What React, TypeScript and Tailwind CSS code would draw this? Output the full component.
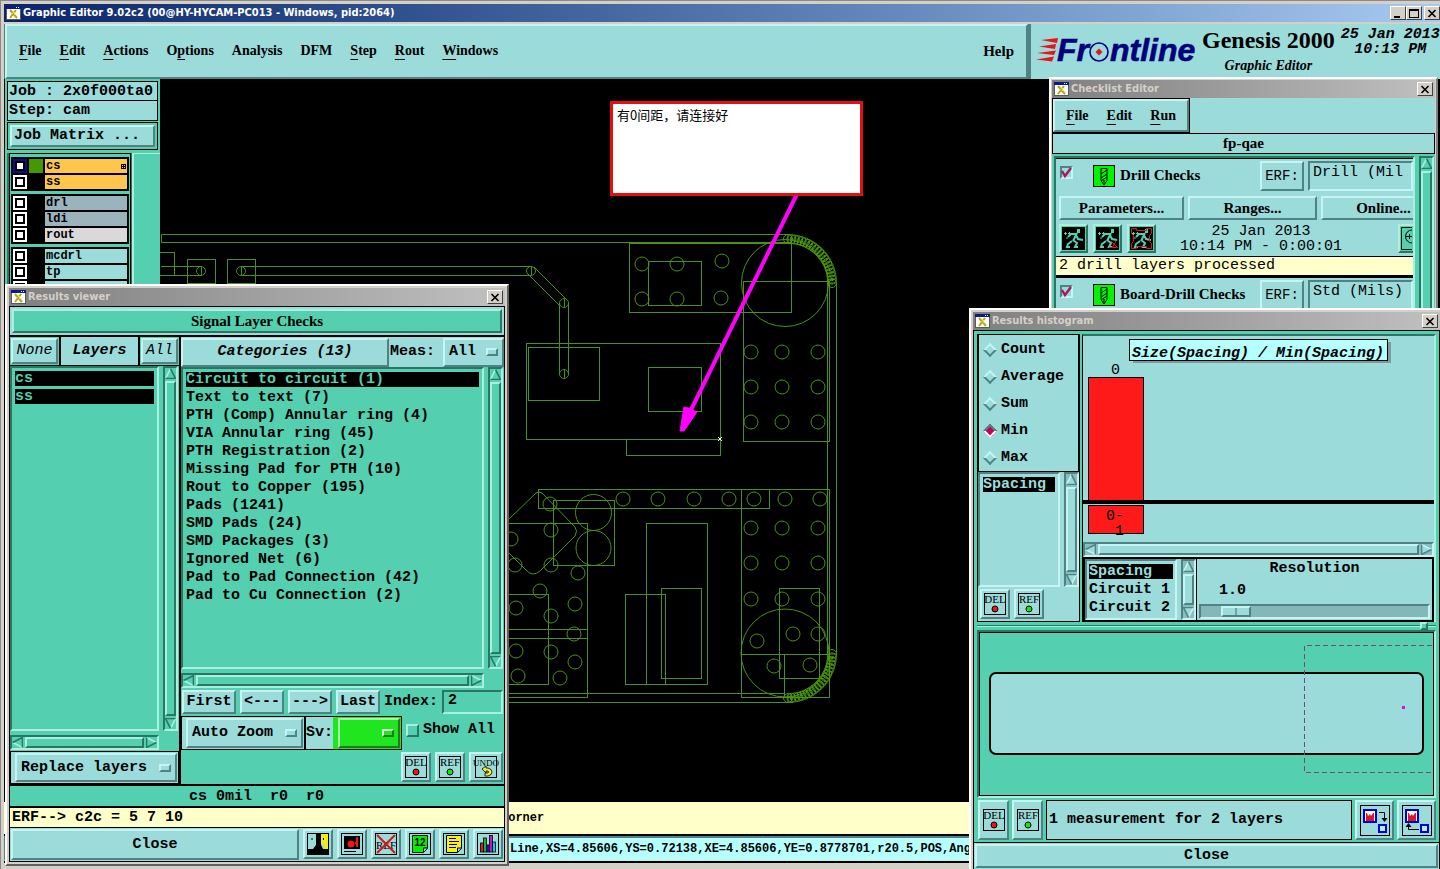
import { useState, type ReactNode } from "react";
import { clsx } from "clsx";

// Motif style bevels, light cyan and teal flavours
const RAISED = "border-2 border-t-[#c6f4f2] border-l-[#c6f4f2] border-b-[#4f8283] border-r-[#4f8283] bg-[#9bdbda]";
const SUNKEN = "border-2 border-t-[#4f8283] border-l-[#4f8283] border-b-[#c6f4f2] border-r-[#c6f4f2] bg-[#9bdbda]";
const RAISED_TEAL = "border-2 border-t-[#a9f0e0] border-l-[#a9f0e0] border-b-[#2a7664] border-r-[#2a7664] bg-[#54cfb0]";
const SUNKEN_TEAL = "border-2 border-t-[#2a7664] border-l-[#2a7664] border-b-[#a9f0e0] border-r-[#a9f0e0] bg-[#54cfb0]";
const SERIF = "font-['Liberation_Serif',serif]";
const MONO = "font-['Liberation_Mono',monospace]";

const MAIN_MENU = [
  ["", "F", "ile"],
  ["", "E", "dit"],
  ["", "A", "ctions"],
  ["O", "p", "tions"],
  ["Analysis", "", ""],
  ["DFM", "", ""],
  ["", "S", "tep"],
  ["", "R", "out"],
  ["", "W", "indows"],
];

const CHECKLIST_MENU = [
  ["", "F", "ile"],
  ["", "E", "dit"],
  ["", "R", "un"],
];

const LAYER_GROUPS = [
  [
    { name: "cs", label: "bg-[#ffc64b]", current: true },
    { name: "ss", label: "bg-[#ffc64b]" },
  ],
  [
    { name: "drl", label: "bg-[#9ab3bd]" },
    { name: "ldi", label: "bg-[#9ab3bd]" },
    { name: "rout", label: "bg-[#dad8da]" },
  ],
  [
    { name: "mcdrl", label: "bg-[#9bdbda]" },
    { name: "tp", label: "bg-[#9bdbda]" },
    { name: "", label: "bg-[#9bdbda]" },
  ],
];

const CATEGORIES = [
  "Circuit to circuit (1)",
  "Text to text (7)",
  "PTH (Comp) Annular ring (4)",
  "VIA Annular ring (45)",
  "PTH Registration (2)",
  "Missing Pad for PTH (10)",
  "Rout to Copper (195)",
  "Pads (1241)",
  "SMD Pads (24)",
  "SMD Packages (3)",
  "Ignored Net (6)",
  "Pad to Pad Connection (42)",
  "Pad to Cu Connection (2)",
];

function MenuItems({ items }: { items: string[][] }) {
  return (
    <>
      {items.map(([pre, key, post]) => (
        <button key={pre + key + post} type="button" className={clsx(SERIF, "text-[14px] font-bold")}>
          {pre}
          <span className="underline decoration-1 underline-offset-4">{key}</span>
          {post}
        </button>
      ))}
    </>
  );
}

function AppIcon() {
  return (
    <svg className="h-[14px] w-[15px] shrink-0" viewBox="0 0 15 14" shapeRendering="crispEdges">
      <path d="M0 0h15v14H0z" fill="#5a5a5a" />
      <path d="M1 3h13v10H1z" fill="#fff" />
      <path d="M0 0h15v3H0z" fill="#0b1a86" />
      <path d="M10 1h1v1h-1zM12 1h1v1h-1z" fill="#fff" />
      <path d="M4 4l7 8M10 4l-6 8" stroke="#b3a617" strokeWidth="2" fill="none" shapeRendering="auto" />
      <path d="M6 8l2-2 1 3" stroke="#e9dd3a" fill="none" />
    </svg>
  );
}

function WinButton({ label, children }: { label: string; children: ReactNode }) {
  return (
    <button
      type="button"
      aria-label={label}
      className="flex h-[14px] w-4 shrink-0 items-center justify-center border border-t-white border-l-white border-b-[#404040] border-r-[#404040] bg-[#d4d0c8]"
    >
      <svg className="h-[9px] w-[10px]" viewBox="0 0 10 9" shapeRendering="crispEdges" fill="none" stroke="#000">
        {children}
      </svg>
    </button>
  );
}

const CLOSE_MARK = <path d="M1.5 1l7 7M8.5 1l-7 7" strokeWidth="1.6" shapeRendering="auto" />;

function TitleBar({ title }: { title: string }) {
  return (
    <div className="flex h-[18px] shrink-0 items-center gap-[2px] bg-linear-to-r from-[#808080] to-[#c0c0c0] px-[2px]">
      <AppIcon />
      <h2 className="flex-1 font-['DejaVu_Sans_Condensed','DejaVu_Sans',sans-serif] text-[11px] font-bold text-[#d4d0c8]">{title}</h2>
      <WinButton label={`Close ${title}`}>{CLOSE_MARK}</WinButton>
    </div>
  );
}

function Scrollbar({ horizontal, teal, className }: { horizontal?: boolean; teal?: boolean; className?: string }) {
  const edge = teal ? "#2a7664" : "#4f8283";
  const lite = teal ? "#a9f0e0" : "#c6f4f2";
  const face = teal ? "#54cfb0" : "#9bdbda";
  const arrow = (turn: string) => (
    <svg className={clsx("size-[11px] shrink-0", turn)} viewBox="0 0 10 10">
      <path d="M5 0.5L9.5 9.5H0.5z" fill={face} />
      <path d="M5 0.5L0.5 9.5" stroke={lite} strokeWidth="1.4" />
      <path d="M5 0.5L9.5 9.5H0.5" stroke={edge} strokeWidth="1.4" fill="none" />
    </svg>
  );
  return (
    <div
      aria-hidden
      className={clsx(
        "flex shrink-0 gap-[2px]",
        teal ? SUNKEN_TEAL : SUNKEN,
        teal ? "bg-[#45a890]" : "bg-[#86bdbd]",
        horizontal ? "h-[15px] flex-row" : "w-[15px] flex-col",
        className
      )}
    >
      {arrow(horizontal ? "-rotate-90" : "")}
      <div className={clsx("min-h-0 flex-1", teal ? RAISED_TEAL : RAISED)} />
      {arrow(horizontal ? "rotate-90" : "rotate-180")}
    </div>
  );
}

function OptionMenu({ label, options, className }: { label: string; options: string[]; className?: string }) {
  return (
    <label className={clsx("flex items-center gap-1 pr-1 pl-1", RAISED, className)}>
      <select aria-label={label} className="min-w-0 flex-1 appearance-none bg-transparent outline-none">
        {options.map((o) => (
          <option key={o}>{o}</option>
        ))}
      </select>
      <span className={clsx("h-2 w-3 shrink-0", RAISED)} />
    </label>
  );
}

function StampButton({ text, dot, className }: { text: string; dot?: string; className?: string }) {
  return (
    <button type="button" className={clsx("flex shrink-0 items-center justify-center", RAISED, className)}>
      <svg className="h-6 w-[26px]" viewBox="0 0 26 24">
        <rect x="2.5" y="1.5" width="21" height="21" fill="none" stroke="#000" shapeRendering="crispEdges" />
        <text x="13" y="11" textAnchor="middle" fontFamily="Liberation Serif" fontSize={text.length > 3 ? 9 : 11} fontWeight="400">
          {text}
        </text>
        {dot ? (
          <circle cx="13" cy="17" r="3" fill={dot} stroke="#000" />
        ) : (
          <>
            <path d="M9 14l4-3v2h2q4 1 4 4t-4 4h-3v-3h3q1-1 0-2h-2v2z" fill="#f4ec3a" stroke="#000" strokeWidth="0.8" />
          </>
        )}
      </svg>
    </button>
  );
}

function FrontlineLogo() {
  return (
    <svg className="h-10 w-[164px] shrink-0" viewBox="0 0 164 40" aria-label="Frontline">
      <g fill="#e8141c">
        <path d="M5 8l17-2-1 5zM3 14.500l17-2.500-1 5zM1 21l19-2.500-2 4.500zM0 27.500l18-3-2 5z" />
      </g>
      <g fill="#00007c" stroke="#00007c" strokeWidth="0.6" fontFamily="Liberation Sans" fontWeight="700" fontStyle="italic" fontSize="32">
        <text x="21" y="29">Fr</text>
        <text x="74" y="29">ntline</text>
      </g>
      <circle cx="63" cy="20" r="9" fill="#9bdbda" stroke="#00007c" strokeWidth="1.600" />
      <path d="M63 16.500l3.500 3.500-3.500 3.500-3.500-3.500z" fill="#e8141c" />
    </svg>
  );
}

/* ---------- board artwork ---------- */

const RECTS = [
  [187, 259, 28, 24], [227, 259, 28, 24], [150, 252, 24, 23],
  [526, 343, 194, 96], [528, 347, 71, 53], [648, 367, 53, 44], [626, 439, 94, 16],
  [629, 243, 162, 69], [648, 261, 53, 44], [743, 281, 86, 160],
  [538, 489, 231, 19], [741, 489, 88, 208], [646, 523, 61, 161], [625, 594, 40, 90],
  [661, 588, 40, 90], [779, 588, 40, 90], [553, 500, 61, 65], [480, 523, 107, 174],
  [480, 594, 68, 90], [480, 629, 107, 9],
];

const HOLES = [
  [642, 264], [677, 264], [722, 261], [642, 299], [677, 299], [721, 298],
  [751, 352], [782, 352], [818, 352], [751, 387], [782, 387], [818, 387], [751, 422], [782, 422], [818, 422],
  [550, 504], [623, 499], [658, 499], [694, 499], [729, 499], [754, 499], [785, 499], [820, 499],
  [751, 528], [782, 528], [818, 528], [751, 563], [782, 563], [818, 563], [751, 599], [782, 599], [818, 599],
  [757, 641], [793, 634], [818, 634], [774, 666], [810, 665],
  [511, 539], [551, 530], [515, 565], [551, 565], [578, 573], [540, 591], [516, 608], [575, 604],
  [551, 616], [574, 634], [516, 651], [551, 652], [575, 662], [518, 676], [560, 678],
];

const VIAS = [[201, 271], [241, 271], [531, 271], [564, 303], [564, 374]];

// overlapping round apertures that make up the two corner arcs
const CORNER = Array.from({ length: 21 }, (_, i) => {
  const a = (i / 20) * (Math.PI / 2);
  return [Math.sin(a) * 44, Math.cos(a) * 44];
});

function BoardCanvas() {
  return (
    <svg className="absolute inset-0 h-full w-full" aria-label="Board layout">
      <g transform="translate(-160 -79)" fill="none" stroke="#4d8f1a">
        {RECTS.map(([x, y, w, h]) => (
          <rect key={`${x}-${y}-${w}`} x={x + 0.5} y={y + 0.5} width={w} height={h} />
        ))}
        {HOLES.map(([x, y]) => (
          <circle key={`${x}-${y}`} cx={x} cy={y} r="7" />
        ))}
        {VIAS.map(([x, y]) => (
          <g key={`${x}-${y}`}>
            <circle cx={x} cy={y} r="4.500" />
            <path d={`M${x + 0.5} ${y - 4}v8`} />
          </g>
        ))}
        <circle cx="785" cy="283" r="43.500" />
        <circle cx="785" cy="653" r="44" />
        <circle cx="593.500" cy="512.500" r="18" />
        <circle cx="593.500" cy="548" r="17.500" />
        <path d="M790 234.500H161.500v8H792M161 266.500h40M161 275.500h40M241 266.500h291M241 275.500h289M534 267l33 33M528 274l32 32M559.500 303v71M568.500 303v71" />
        <path d="M827.500 283v372M836.500 283v372M480 693.500h305M480 702.500h313M769 489.500h60M741 654.500h88M784.500 654v43" />
        <path d="M508 520L536 493q3-2 6 0L575 527q3 4 0 9L540 571q-7 6-13 0L508 552" />
        <g stroke="#4b9a0c">
          {CORNER.map(([dx, dy]) => (
            <g key={dx}>
              <circle cx={788 + dx} cy={283 - dy} r="4.500" />
              <path d={`M${788 + dx * 0.91} ${283 - dy * 0.91}L${788 + dx * 1.09} ${283 - dy * 1.09}`} />
              <circle cx={788 + dx} cy={654 + dy} r="4.500" />
              <path d={`M${788 + dx * 0.91} ${654 + dy * 0.91}L${788 + dx * 1.09} ${654 + dy * 1.09}`} />
            </g>
          ))}
        </g>
        <path d="M796.500 195L690 412" stroke="#ff00ff" strokeWidth="4" />
        <path d="M680 431l4-24 4 1 9 4-13 19z" fill="#ff00ff" stroke="#ff00ff" />
        <path d="M718 437l4 4M722 437l-4 4" stroke="#fff" />
      </g>
    </svg>
  );
}

function Sidebar() {
  return (
    <aside className="flex w-[155px] shrink-0 flex-col overflow-hidden bg-[#54cfb0] pt-[2px] pl-[2px]">
      <div className="mr-[2px] border border-black bg-[#9bdbda]">
        <p className="h-[19px] border-b border-black pl-px leading-5 whitespace-pre">Job : 2x0f000ta0</p>
        <p className="h-[19px] pl-px leading-5">Step: cam</p>
      </div>
      <div className="mt-px mr-[2px] border border-black p-[2px]">
        <button type="button" className={clsx("h-[22px] w-full pl-[2px] text-left leading-[18px]", RAISED)}>
          Job Matrix ...
        </button>
      </div>
      <div className="mt-[3px] flex min-h-0 flex-1 bg-[#2a7664] pl-[2px]">
        <div className="flex w-[122px] flex-col gap-[3px] border border-black bg-[#54cfb0] px-px pt-[3px]">
          {LAYER_GROUPS.map((group, i) => (
            <div key={i} className="flex flex-col gap-[2px] bg-black p-[2px]">
              {group.map((layer) => (
                <div key={layer.name} className="flex h-[14px] items-center gap-[2px]">
                  <input
                    type="checkbox"
                    aria-label={`Display ${layer.name}`}
                    className={clsx(
                      "size-[14px] shrink-0 appearance-none border-2 bg-white outline-2 -outline-offset-4 outline-black",
                      layer.current ? "border-[#0d0d8e]" : "border-white"
                    )}
                  />
                  <span className={clsx("size-[14px] shrink-0", layer.current ? "bg-[#449900]" : "bg-black")} />
                  <span className={clsx("flex h-full flex-1 items-center justify-between px-px text-[12px] leading-[14px]", layer.label)}>
                    {layer.name}
                    {layer.current && (
                      <svg className="size-[5px]" viewBox="0 0 5 5" shapeRendering="crispEdges">
                        <path d="M0 0h5v5H0zM1 1v1h1V1zM3 1v1h1V1zM1 3v1h1V3zM3 3v1h1V3z" fillRule="evenodd" />
                      </svg>
                    )}
                  </span>
                </div>
              ))}
            </div>
          ))}
        </div>
        <div className="ml-px flex-1 border-t border-l-2 border-[#a9f0e0] bg-[#54cfb0]" />
      </div>
    </aside>
  );
}

/* ---------- checklist editor ---------- */

function Runner({ variant }: { variant: "plain" | "pick" | "frame" }) {
  return (
    <button type="button" aria-label={`Run ${variant}`} className={clsx("flex size-[29px] items-center justify-center", RAISED_TEAL)}>
      <svg className="size-[23px]" viewBox="0 0 23 23">
        <rect width="23" height="23" fill="#000" />
        <path d="M15 2h3v4h-3z" fill="#54cfb0" />
        <path d="M15 6l-4 8M14 7H9L6 10M14 8l2 4 5 1M11 13l4 3-2 4h3M10 14l-4 3-1 3h3" fill="none" stroke="#54cfb0" strokeWidth="2" />
        <path d="M2 6.500h3M3.500 5v3M6 6.500h3M7.500 5v3M4 11h2" stroke="#54cfb0" />
        {variant === "pick" && <path d="M15 14l6 6M20 14l-4 7M13 20.500h9" stroke="#e8141c" fill="none" />}
        {variant === "frame" && <path d="M1.500 1.500h5v2h10v-2h5v5l-2 2v6l2 2v5h-5v-2h-10v2h-5v-5l2-2v-6l-2-2z" stroke="#e8141c" fill="none" />}
      </svg>
    </button>
  );
}

function ChecklistItem({ name, erf }: { name: string; erf: string }) {
  return (
    <section className="h-[119px] shrink-0 border-t border-black">
      <div className="flex h-9 items-start pt-[2px] pl-1">
        <span className="relative mt-[5px] size-[13px]">
          <input type="checkbox" defaultChecked aria-label={name} className={clsx("block size-[13px] appearance-none border", SUNKEN)} />
          <svg className="pointer-events-none absolute inset-0 size-[13px]" viewBox="0 0 13 13">
            <path d="M2 5l3 5 6-8" fill="none" stroke="#b0145a" strokeWidth="2.400" />
          </svg>
        </span>
        <svg className="mt-1 ml-5 size-[22px]" viewBox="0 0 22 22">
          <rect x="0.5" y="0.5" width="21" height="21" fill="#00f600" stroke="#000" />
          <path d="M8 3.500h6v12l-3 4.500-3-4.500zM8 9l6-4M8 13l6-4M8 16l6-4M11 15v4" fill="none" stroke="#000" />
        </svg>
        <h3 className={clsx(SERIF, "mt-[5px] ml-[5px] flex-1 text-[15px] font-bold")}>{name}</h3>
        <button type="button" className={clsx("mr-1 h-[30px] w-11 text-[14px] font-normal", RAISED)}>ERF:</button>
        <input aria-label={`${name} ERF`} defaultValue={erf} className={clsx("h-[30px] w-[105px] pb-2 pl-[3px] font-normal", SUNKEN)} />
      </div>
      <div className={clsx(SERIF, "flex h-[26px] items-center gap-1 overflow-hidden pl-[3px] text-[15px]")}>
        <button type="button" className={clsx("h-6 w-[125px] shrink-0", RAISED)}>Parameters...</button>
        <button type="button" className={clsx("h-6 w-[129px] shrink-0", RAISED)}>Ranges...</button>
        <button type="button" className={clsx("h-6 w-[125px] shrink-0", RAISED)}>Online...</button>
      </div>
      <div className="flex h-[35px] items-center gap-[5px] overflow-hidden pl-[3px]">
        <Runner variant="plain" />
        <Runner variant="pick" />
        <Runner variant="frame" />
        <p className="flex-1 pr-8 text-center leading-[15px] font-normal">
          25 Jan 2013
          <br />
          10:14 PM - 0:00:01
        </p>
        <button type="button" aria-label="Zoom to results" className={clsx("h-[29px] w-[15px] overflow-hidden border-r-0", RAISED_TEAL)}>
          <svg className="h-[23px] w-3" viewBox="0 0 12 23" fill="none" stroke="#000">
            <path d="M12 0.500H1.500v22H12M12 3a6 6 0 0 0 0 13M5 9.500h7M9.500 7v5" />
          </svg>
        </button>
      </div>
      <p className="h-[21px] border-y border-b-2 border-black bg-[#ffffca] pl-[3px] font-normal">2 drill layers processed</p>
    </section>
  );
}

function ChecklistEditor() {
  return (
    <div className="absolute top-[76px] right-[2px] flex h-[270px] w-[389px] flex-col border-2 border-t-white border-l-white border-b-[#808080] border-r-[#808080] bg-[#d4d0c8] p-px">
      <TitleBar title="Checklist Editor" />
      <div className="flex min-h-0 flex-1 flex-col bg-[#9bdbda]">
        <div className="flex">
          <div className="border border-black">
            <div className={clsx("flex h-[33px] items-center gap-[18px] px-[11px]", RAISED)}>
              <MenuItems items={CHECKLIST_MENU} />
            </div>
          </div>
        </div>
        <h3 className={clsx(SERIF, "h-[21px] border border-black text-center text-[15px] leading-[19px] font-bold")}>fp-qae</h3>
        <div className="flex min-h-0 flex-1 gap-1 bg-[#54cfb0] pt-[2px] pr-px pl-[2px]">
          <div className="flex min-w-0 flex-1 flex-col overflow-hidden border-t-2 border-r-2 border-l-2 border-t-[#2a7664] border-r-[#a9f0e0] border-l-[#2a7664] bg-[#9bdbda]">
            <ChecklistItem name="Drill Checks" erf="Drill (Mil" />
            <ChecklistItem name="Board-Drill Checks" erf="Std (Mils)" />
          </div>
          <Scrollbar teal />
        </div>
      </div>
    </div>
  );
}

/* ---------- results viewer ---------- */

function ListBox({ label, items, selected, className, teal }: { label: string; items: string[]; selected: string[]; className?: string; teal?: boolean }) {
  return (
    <ul role="listbox" aria-label={label} className={clsx("min-w-0 flex-1 overflow-hidden", teal ? SUNKEN_TEAL : SUNKEN, className)}>
      {items.map((item) => {
        const on = selected.includes(item);
        return (
          <li
            key={item}
            role="option"
            aria-selected={on}
            className={clsx(
              "mb-[3px] h-[15px] leading-[15px] whitespace-nowrap",
              on && "bg-black",
              on && (teal ? "text-[#54cfb0]" : "text-[#9bdbda]")
            )}
          >
            {item}
          </li>
        );
      })}
    </ul>
  );
}

function ToolButton({ label, children }: { label: string; children: ReactNode }) {
  return (
    <button type="button" aria-label={label} className={clsx("flex h-[30px] w-[30px] shrink-0 items-center justify-center", RAISED)}>
      <svg className="size-[22px]" viewBox="0 0 22 22">
        {children}
        <rect x="0.5" y="0.5" width="21" height="21" fill="none" stroke="#000" />
      </svg>
    </button>
  );
}

function ResultsViewer() {
  const [index, setIndex] = useState("2");
  return (
    <div className="absolute top-[283px] bottom-[3px] left-1 flex w-[504px] flex-col border-2 border-t-white border-l-white border-b-[#606060] border-r-[#606060] bg-[#d4d0c8] p-[2px]">
      <TitleBar title="Results viewer" />
      <div className="flex min-h-0 flex-1 flex-col border border-black bg-[#9bdbda]">
        <div className="p-[2px]">
          <h3 className={clsx(SERIF, "h-6 text-center text-[15px] leading-5 font-bold", RAISED_TEAL)}>Signal Layer Checks</h3>
        </div>

        <div className="flex min-h-0 flex-1 gap-[2px] border-y-2 border-black bg-black">
          <div className="flex w-[169px] shrink-0 flex-col bg-[#54cfb0]">
            <div className="flex h-[29px] gap-[2px] border-b border-black bg-black font-normal italic">
              <div className="bg-[#54cfb0] p-px">
                <button type="button" className={clsx("h-[26px] w-[47px] italic", RAISED)}>None</button>
              </div>
              <h4 className="flex flex-1 items-center justify-center bg-[#9bdbda] font-bold">Layers</h4>
              <div className="bg-[#54cfb0] p-px">
                <button type="button" className={clsx("h-[26px] w-[37px] italic", RAISED)}>All</button>
              </div>
            </div>
            <div className="flex min-h-0 flex-1 gap-1">
              <ListBox teal label="Layers" items={["cs", "ss"]} selected={["cs", "ss"]} className="px-[3px] pt-[3px]" />
              <Scrollbar teal className="mr-px" />
            </div>
            <Scrollbar horizontal teal className="mt-1 mr-5 mb-px" />
            <div className="border border-black bg-[#9bdbda] p-px pl-1">
              <OptionMenu label="Layer display mode" options={["Replace layers"]} className="h-[29px]" />
            </div>
          </div>

          <div className="flex min-w-0 flex-1 flex-col bg-[#54cfb0]">
            <div className="flex h-[30px] items-center bg-[#9bdbda]">
              <button type="button" className={clsx("h-[29px] w-[208px] shrink-0 italic", RAISED)}>Categories (13)</button>
              <span className="flex-1 pl-px">Meas:</span>
              <OptionMenu label="Measurements" options={["All"]} className="h-[29px] w-[61px]" />
            </div>
            <div className="flex min-h-0 flex-1 gap-1">
              <ListBox teal label="Categories" items={CATEGORIES} selected={[CATEGORIES[0]]} className="px-[3px] pt-[3px]" />
              <Scrollbar teal className="mr-px" />
            </div>
            <Scrollbar horizontal teal className="mt-1 mr-5" />
            <div className="flex items-center gap-1 px-px py-[2px]">
              <button type="button" className={clsx("h-6 w-[54px] shrink-0", RAISED)}>First</button>
              <button type="button" className={clsx("h-6 w-[44px] shrink-0", RAISED)}>&lt;---</button>
              <button type="button" className={clsx("h-6 w-[44px] shrink-0", RAISED)}>---&gt;</button>
              <button type="button" className={clsx("h-6 w-[44px] shrink-0", RAISED)}>Last</button>
              <label htmlFor="result-index" className="shrink-0">Index:</label>
              <input
                id="result-index"
                value={index}
                onChange={(e) => setIndex(e.target.value)}
                className={clsx("h-6 w-0 min-w-0 flex-1 pb-1 pl-1", SUNKEN_TEAL)}
              />
            </div>
            <div className="flex h-[34px]">
              <div className="flex border border-black bg-[#9bdbda]">
                <div className="border-r-2 border-black p-px pl-1">
                  <OptionMenu label="Zoom mode" options={["Auto Zoom"]} className="h-[30px] w-[117px]" />
                </div>
                <span className="self-center">Sv:</span>
                <label className="flex bg-[#1fe61f] p-px pl-[5px]">
                  <span className="flex h-[30px] w-[62px] items-center justify-end border-2 border-t-[#a8f8a8] border-l-[#a8f8a8] border-b-[#1d7c1d] border-r-[#1d7c1d] pr-1">
                    <select aria-label="Severity" className="min-w-0 flex-1 appearance-none bg-transparent">
                      <option value="green" />
                    </select>
                    <span className="h-2 w-3 border-2 border-t-[#d8ffd8] border-l-[#d8ffd8] border-b-[#1d7c1d] border-r-[#1d7c1d]" />
                  </span>
                </label>
              </div>
              <label className="ml-1 flex items-center gap-1 pb-[6px]">
                <input type="checkbox" className={clsx("size-[13px] appearance-none", RAISED_TEAL, "border")} />
                Show All
              </label>
            </div>
            <div className="flex justify-end gap-1 pt-[2px] pr-px pb-[2px]">
              <StampButton text="DEL" dot="#f01414" className="size-[30px]" />
              <StampButton text="REF" dot="#14e614" className="size-[30px]" />
              <StampButton text="UNDO" className="h-[30px] w-[34px]" />
            </div>
          </div>
        </div>

        <p className="h-5 bg-[#54cfb0] pl-[179px] leading-[22px] whitespace-pre">cs 0mil  r0  r0</p>
        <p className="h-[22px] border-t-2 border-b border-black bg-[#ffffca] pl-[2px] leading-5">ERF--&gt; c2c = 5 7 10</p>
        <div className="flex gap-1 p-px pb-px">
          <button type="button" className={clsx("h-[31px] flex-1", RAISED)}>Close</button>
          <ToolButton label="Compare">
            <path d="M11 0h11v16h-4l-2-5h-5z" fill="#f4ec14" />
            <path d="M0 16h6l3-4V0h5v12l2 4h6v6H0z" fill="#000" />
            <path d="M5 5v2M16.500 5v2" stroke="#000" />
          </ToolButton>
          <ToolButton label="Snapshot">
            <path d="M3 3h16v13H3zM3 18h12v1H3z" fill="#000" />
            <circle cx="10" cy="11" r="3.500" fill="#f01414" />
            <path d="M14 10h3M16 4v10" stroke="#f01414" strokeWidth="2" />
          </ToolButton>
          <ToolButton label="Clear reference">
            <text x="11" y="16" textAnchor="middle" fontFamily="Liberation Serif" fontSize="11" fontWeight="400">REF</text>
            <path d="M2 2l18 18M20 2L2 20" stroke="#d8141c" strokeWidth="2" />
          </ToolButton>
          <ToolButton label="Numbering">
            <path d="M3.500 2.500h15v13l-4 4h-11z" fill="#00f000" stroke="#000" />
            <path d="M14.500 19v-4h4" fill="#9bdbda" stroke="#000" />
            <text x="11" y="13" textAnchor="middle" fontFamily="Liberation Sans" fontSize="10" fontWeight="700">12</text>
          </ToolButton>
          <ToolButton label="Report">
            <path d="M3.500 2.500h15v13l-4 4h-11z" fill="#f8f014" stroke="#000" />
            <path d="M14.500 19v-4h4" fill="#9bdbda" stroke="#000" />
            <path d="M6 5.500h7M6 8.500h10M6 11.500h8M6 14.500h7" stroke="#000" />
          </ToolButton>
          <ToolButton label="Histogram">
            <g stroke="#000" strokeWidth="0.8">
              <rect x="3.500" y="10" width="3" height="9" fill="#e8141c" />
              <rect x="6.500" y="5" width="3" height="14" fill="#14b43c" />
              <rect x="9.500" y="12" width="3" height="7" fill="#1414c8" />
              <rect x="12.500" y="2.500" width="3" height="16.500" fill="#c814c8" />
              <rect x="15.500" y="9" width="3" height="10" fill="#14c8e8" />
            </g>
          </ToolButton>
        </div>
      </div>
    </div>
  );
}

/* ---------- results histogram ---------- */

function HistogramChart() {
  return (
    <svg className="block min-h-0 w-full flex-1" aria-label="Size(Spacing) / Min(Spacing)">
      <g shapeRendering="crispEdges">
        <rect x="50" y="6" width="258" height="21" fill="#7a9c9c" />
        <rect x="46.500" y="3.500" width="258" height="21" fill="#b6ffff" stroke="#000" />
        <rect x="5.500" y="41.500" width="55" height="123" fill="#ff1a1a" stroke="#000" />
        <rect x="5.500" y="169.500" width="55" height="28" fill="#ff1a1a" stroke="#000" />
        <rect x="0" y="164" width="100%" height="4" />
      </g>
      <text x="49" y="21" fontStyle="italic">Size(Spacing) / Min(Spacing)</text>
      <text x="28" y="38" fontWeight="400">0</text>
      <text x="23" y="184" fontWeight="400">0-</text>
      <text x="32" y="199" fontWeight="400">1</text>
    </svg>
  );
}

function BoardMap() {
  return (
    <svg className="block h-full w-full overflow-hidden" aria-label="Board overview">
      <rect x="10" y="40" width="433" height="81" rx="6" fill="#9bdbda" stroke="#000" strokeWidth="2" />
      <path d="M460 12.500H324.500v127H460" fill="none" stroke="#7b4a6a" strokeDasharray="5 3" />
      <rect x="422" y="73" width="3" height="3" fill="#d414d4" />
    </svg>
  );
}

function TransferIcon({ up }: { up?: boolean }) {
  return (
    <svg className="h-[31px] w-[30px] shrink-0" viewBox="0 0 30 31">
      <rect x="0.500" y="0.500" width="29" height="30" fill="none" stroke="#000" />
      <rect x="4" y="5" width="12" height="12" fill="#fff" stroke="#0000d8" strokeWidth="2" />
      <path d="M6 16V8h1l1 3 2-2 1 2 2-3h1v8z" fill="#e0142c" />
      <rect x="19" y="20" width="7" height="7" fill="#b8ecec" stroke="#0000d8" strokeWidth="2" />
      {up ? (
        <path d="M17 24.500H6.500V21" stroke="#000" fill="none" />
      ) : (
        <path d="M19 7.500h5.500V14" stroke="#000" fill="none" />
      )}
      <path d={up ? "M6.500 18l-3 4h6z" : "M24.500 17l-3-4h6z"} fill="#000" />
    </svg>
  );
}

function ResultsHistogram() {
  const [stat, setStat] = useState("Min");
  return (
    <div className="absolute top-[307px] right-0 bottom-0 flex w-[471px] flex-col border-2 border-r-0 border-b-0 border-white bg-[#d4d0c8] pt-[2px] pl-[2px]">
      <TitleBar title="Results histogram" />
      <div className="flex min-h-0 flex-1 flex-col border border-b-0 border-black bg-[#9bdbda]">
        <div className="flex min-h-0 flex-1 flex-col border-b border-black bg-[#54cfb0] px-[3px]">
          <div className="flex h-[291px] shrink-0 gap-[2px] pt-[3px]">
            <div className="flex w-[103px] shrink-0 flex-col border border-black bg-[#9bdbda]">
              <div role="radiogroup" aria-label="Statistic" className="h-[137px] border-r border-b border-l border-black pt-px pl-[6px]">
                {["Count", "Average", "Sum", "Min", "Max"].map((s) => (
                  <label key={s} className="flex h-[27px] items-center gap-[6px]">
                    <input
                      type="radio"
                      name="stat"
                      checked={stat === s}
                      onChange={() => setStat(s)}
                      className="size-[10px] rotate-45 appearance-none border-2 border-t-[#c6f4f2] border-l-[#c6f4f2] border-b-[#4f8283] border-r-[#4f8283] checked:border-t-[#4f8283] checked:border-l-[#4f8283] checked:border-b-white checked:border-r-white checked:bg-[#c4005a]"
                    />
                    {s}
                  </label>
                ))}
              </div>
              <div className="flex min-h-0 flex-1 gap-1">
                <ListBox label="Measurement" items={["Spacing"]} selected={["Spacing"]} className="px-[3px] pt-[3px]" />
                <Scrollbar />
              </div>
              <div className="flex gap-1 p-[2px]">
                <StampButton text="DEL" dot="#f01414" className="size-[30px]" />
                <StampButton text="REF" dot="#14e614" className="size-[30px]" />
              </div>
            </div>

            <div className="flex min-w-0 flex-1 flex-col border-t-2 border-r-2 border-l border-t-[#2a7664] border-r-[#a9f0e0] border-l-black bg-[#9bdbda]">
              <HistogramChart />
              <Scrollbar horizontal />
              <div className="flex h-[65px] border-2 border-black">
                <ListBox
                  label="Fields"
                  items={["Spacing", "Circuit 1", "Circuit 2"]}
                  selected={["Spacing"]}
                  className="max-w-[92px] px-[2px] pt-[3px]"
                />
                <Scrollbar className="ml-1" />
                <div className="flex min-w-0 flex-1 flex-col border-l border-black px-[2px] pt-px pb-px">
                  <label htmlFor="resolution" className="h-[18px] text-center">Resolution</label>
                  <output htmlFor="resolution" className="flex-1 pt-1 pl-5 leading-[17px]">1.0</output>
                  <input
                    id="resolution"
                    type="range"
                    min={0}
                    max={10}
                    defaultValue={1}
                    className={clsx(
                      "h-[15px] w-full appearance-none",
                      SUNKEN,
                      "bg-[#84b8b8] [&::-webkit-slider-thumb]:h-[11px] [&::-webkit-slider-thumb]:w-[30px] [&::-webkit-slider-thumb]:appearance-none [&::-webkit-slider-thumb]:border-2 [&::-webkit-slider-thumb]:border-t-[#c6f4f2] [&::-webkit-slider-thumb]:border-l-[#c6f4f2] [&::-webkit-slider-thumb]:border-r-[#4f8283] [&::-webkit-slider-thumb]:border-b-[#4f8283] [&::-webkit-slider-thumb]:bg-linear-to-r [&::-webkit-slider-thumb]:from-[#9bdbda] [&::-webkit-slider-thumb]:from-45% [&::-webkit-slider-thumb]:via-[#4f8283] [&::-webkit-slider-thumb]:via-50% [&::-webkit-slider-thumb]:to-[#9bdbda] [&::-webkit-slider-thumb]:to-55%"
                    )}
                  />
                </div>
              </div>
            </div>
          </div>

          {/* pane sash */}
          <div className="flex h-2 shrink-0 items-center">
            <span className="h-[2px] flex-1 border-t border-b border-t-[#2a7664] border-b-[#a9f0e0]" />
            <span className={clsx("size-2", RAISED_TEAL)} />
            <span className="h-[2px] w-2 border-t border-b border-t-[#2a7664] border-b-[#a9f0e0]" />
          </div>

          <div className={clsx("min-h-0 flex-1", SUNKEN_TEAL)}>
            <div className="h-full border border-black">
              <BoardMap />
            </div>
          </div>
          <div className="flex gap-[3px] py-[2px] pl-px">
            <StampButton text="DEL" dot="#f01414" className="h-10 w-[31px]" />
            <StampButton text="REF" dot="#14e614" className="h-10 w-[31px]" />
            <p className="flex flex-1 items-center border border-black bg-[#9bdbda] pl-[2px]">1 measurement for 2 layers</p>
            <button type="button" aria-label="Send to results" className={clsx("flex h-10 w-[39px] items-center justify-center", RAISED)}>
              <TransferIcon />
            </button>
            <button type="button" aria-label="Load from results" className={clsx("flex h-10 w-[39px] items-center justify-center", RAISED)}>
              <TransferIcon up />
            </button>
          </div>
        </div>
        <div className="p-px">
          <button type="button" className={clsx("h-6 w-full", RAISED)}>Close</button>
        </div>
      </div>
    </div>
  );
}

export default function App() {
  return (
    <div
      className={clsx(
        MONO,
        "relative flex h-screen min-h-[760px] flex-col overflow-hidden border-t border-l border-[#8c8a84] bg-[#d4d0c8] pt-[3px] pb-[6px] pl-[3px] text-[15px] leading-[18px] font-bold text-black"
      )}
    >
      <div className="flex h-[18px] shrink-0 items-center gap-[2px] bg-linear-to-r from-[#0a246a] to-[#a6caf0] pl-[2px]">
        <AppIcon />
        <h1 className="flex-1 font-['DejaVu_Sans_Condensed','DejaVu_Sans',sans-serif] text-[11px] font-bold text-white">
          Graphic Editor 9.02c2 (00@HY-HYCAM-PC013 - Windows, pid:2064)
        </h1>
        <div className="flex">
          <WinButton label="Minimize">
            <path d="M1 7.500h6" strokeWidth="2" />
          </WinButton>
          <WinButton label="Maximize">
            <path d="M0.500 0.500h9v8h-9zM0 1.500h10" />
          </WinButton>
        </div>
        <WinButton label="Close">{CLOSE_MARK}</WinButton>
      </div>

      <header className="mt-[2px] flex h-[55px] shrink-0 bg-[#4f8283] pl-px">
        <nav className={clsx("flex flex-1 items-center gap-[18px] px-3 pb-px", RAISED)}>
          <MenuItems items={MAIN_MENU} />
          <button type="button" className={clsx(SERIF, "ml-auto text-[15px] font-bold")}>Help</button>
        </nav>
        <div className="ml-[3px] flex w-[409px] gap-[2px] overflow-hidden bg-[#9bdbda] pt-[2px] pl-[5px]">
          <div className="pt-[6px]">
            <FrontlineLogo />
          </div>
          <div className={clsx(SERIF, "shrink-0 text-center")}>
            <p className="text-[24px] leading-7">Genesis 2000</p>
            <p className="text-[14px] leading-6 italic">Graphic Editor</p>
          </div>
          <p className="shrink-0 pt-px pl-1 text-center leading-[15px] italic">
            25 Jan 2013
            <br />
            10:13 PM
          </p>
        </div>
      </header>

      <div className="flex min-h-0 flex-1 bg-black pl-px">
        <Sidebar />
        <main className="relative min-w-0 flex-1 overflow-hidden bg-black">
          <BoardCanvas />
          <p className="absolute top-[22px] left-[450px] h-[95px] w-[253px] border-[3px] border-[#e60f0f] bg-white px-1 pt-[2px] font-['Noto_Sans_CJK_SC',sans-serif] text-[13px] font-normal">
            有0间距，请连接好
          </p>
        </main>
      </div>
      <p className="flex h-8 shrink-0 items-center bg-[#ffffca] pl-[497px] text-[12px]">corner</p>
      <div className="h-[29px] shrink-0 border-y-2 border-black bg-[#9bdbda]">
        <p className={clsx("h-full pl-[504px] text-[12px] leading-[23px] whitespace-nowrap", SUNKEN, "bg-[#b6ffff]")}>
          Line,XS=4.85606,YS=0.72138,XE=4.85606,YE=0.8778701,r20.5,POS,Ang=-
        </p>
      </div>

      <ChecklistEditor />
      <ResultsViewer />
      <ResultsHistogram />
    </div>
  );
}
